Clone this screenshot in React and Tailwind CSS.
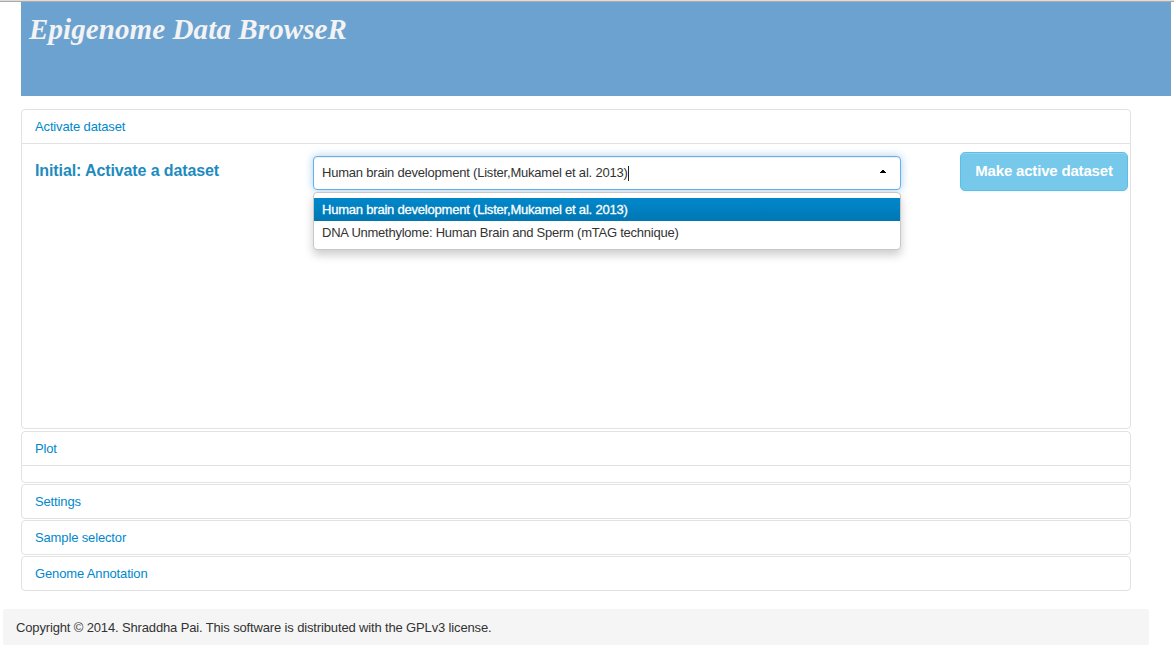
const options = [
  'Human brain development (Lister,Mukamel et al. 2013)',
  'DNA Unmethylome: Human Brain and Sperm (mTAG technique)',
];

function Panel({ title, className = '', children }) {
  return (
    <section className={`rounded-[4px] border border-[#e2e2e2] ${className}`}>
      <h2 className="flex h-[33px] items-center px-[13px] tracking-[-0.14px] text-[#0088cc]">
        <a href="#">{title}</a>
      </h2>
      {children}
    </section>
  );
}

function DatasetSelect() {
  return (
    <div className="relative mt-3 ml-[291px] h-[34px] w-[588px] shrink-0 tracking-[-0.21px]">
      <div className="flex h-full items-center rounded-[4px] border border-[#66afe9] bg-white pl-2 pr-[14px] shadow-[inset_0_1px_1px_rgba(0,0,0,0.075),0_0_8px_rgba(102,175,233,0.6)]">
        <span className="whitespace-nowrap">{options[0]}</span>
        <span className="h-[15px] w-px bg-[#222]" />
        <svg className="ml-auto -mt-[3px]" width="6" height="3" viewBox="0 0 6 3" shapeRendering="crispEdges">
          <path d="M2 0h2v1h1v1h1v1H0V2h1V1h1z" fill="#000" />
        </svg>
      </div>
      <ul className="absolute top-[36px] left-0 w-full rounded-[4px] border border-[#c8c8c8] bg-white py-[5px] shadow-[0_5px_10px_rgba(0,0,0,0.2)]">
        <li className="flex h-[23px] items-center bg-linear-to-b from-[#0088cc] to-[#0077b3] px-2 text-white [-webkit-text-stroke:0.3px_white]">
          {options[0]}
        </li>
        <li className="flex h-[23px] items-center px-2 tracking-[-0.24px]">{options[1]}</li>
      </ul>
    </div>
  );
}

export default function App() {
  return (
    <div className="h-[669px] overflow-hidden bg-white font-['Liberation_Sans',Arial,sans-serif] text-[13px] leading-[18px] text-[#333]">
      <div className="h-[2px] border-b border-[#aaa] bg-[#ddd]" />
      <header className="ml-[21px] h-[94px] w-[1150px] bg-[#6ba2d0] pl-2 pt-2">
        <h1 className="font-['Homemade_Apple','Liberation_Serif',cursive] text-[29px] leading-[38px] font-bold tracking-[0.1px] whitespace-nowrap text-[#f3f3f3] italic">
          Epigenome Data BrowseR
        </h1>
      </header>
      <main className="mt-[13px] ml-[21px] w-[1110px]">
        <Panel title="Activate dataset" className="mb-[2px] h-[320px]">
          <div className="flex items-start border-t border-[#e2e2e2]">
            <h3 className="mt-[18px] ml-[13px] w-[184px] -mr-[197px] text-[16px] font-bold tracking-[-0.11px] whitespace-nowrap text-[#1e8bbe]">
              Initial: Activate a dataset
            </h3>
            <DatasetSelect />
            <button className="mt-2 ml-[59px] h-[39px] w-[168px] rounded-[5px] border border-[#5bc0e6] bg-[#76c9eb] pb-0.5 text-[15px] font-bold tracking-[-0.18px] whitespace-nowrap text-white shadow-[inset_0_1px_0_rgba(255,255,255,0.2),0_1px_2px_rgba(0,0,0,0.05)]">
              Make active dataset
            </button>
          </div>
        </Panel>
        <Panel title="Plot" className="mb-px h-[52px]">
          <div className="border-t border-[#e2e2e2]" />
        </Panel>
        <Panel title="Settings" className="mb-px" />
        <Panel title="Sample selector" className="mb-px" />
        <Panel title="Genome Annotation" />
      </main>
      <footer className="mt-[18px] ml-[3px] flex h-9 w-[1146px] items-center rounded-[2px] bg-[#f5f5f5] px-[13px] pt-0.5 tracking-[-0.145px]">
        Copyright © 2014. Shraddha Pai. This software is distributed with the GPLv3 license.
      </footer>
    </div>
  );
}
